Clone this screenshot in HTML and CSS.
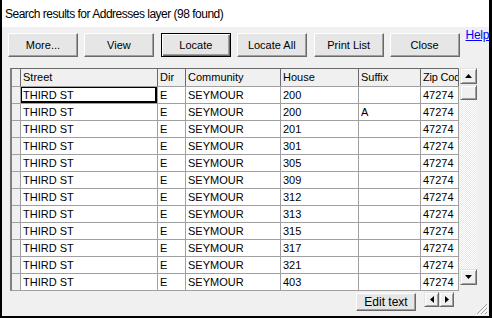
FILE: index.html
```html
<!DOCTYPE html>
<html>
<head>
<meta charset="utf-8">
<link rel="stylesheet" href="styles.css">
</head>
<body>
<div class="window">
  <div class="title">Search results for Addresses layer (98 found)</div>
  <div class="toolbar">
    <div class="btn">More...</div>
    <div class="btn">View</div>
    <div class="btn default wide1">Locate</div>
    <div class="btn">Locate All</div>
    <div class="btn wide1">Print List</div>
    <div class="btn">Close</div>
    <a class="help" href="#">Help</a>
  </div>
  <div class="gridarea">
    <div class="grid">
      <div class="hd ind"></div><div class="hd">Street</div><div class="hd">Dir</div><div class="hd">Community</div><div class="hd">House</div><div class="hd">Suffix</div><div class="hd clip">Zip Code</div>

      <div class="ind"></div><div class="c focus">THIRD ST</div><div class="c">E</div><div class="c">SEYMOUR</div><div class="c">200</div><div class="c"></div><div class="c">47274</div>
      <div class="ind"></div><div class="c">THIRD ST</div><div class="c">E</div><div class="c">SEYMOUR</div><div class="c">200</div><div class="c">A</div><div class="c">47274</div>
      <div class="ind"></div><div class="c">THIRD ST</div><div class="c">E</div><div class="c">SEYMOUR</div><div class="c">201</div><div class="c"></div><div class="c">47274</div>
      <div class="ind"></div><div class="c">THIRD ST</div><div class="c">E</div><div class="c">SEYMOUR</div><div class="c">301</div><div class="c"></div><div class="c">47274</div>
      <div class="ind"></div><div class="c">THIRD ST</div><div class="c">E</div><div class="c">SEYMOUR</div><div class="c">305</div><div class="c"></div><div class="c">47274</div>
      <div class="ind"></div><div class="c">THIRD ST</div><div class="c">E</div><div class="c">SEYMOUR</div><div class="c">309</div><div class="c"></div><div class="c">47274</div>
      <div class="ind"></div><div class="c">THIRD ST</div><div class="c">E</div><div class="c">SEYMOUR</div><div class="c">312</div><div class="c"></div><div class="c">47274</div>
      <div class="ind"></div><div class="c">THIRD ST</div><div class="c">E</div><div class="c">SEYMOUR</div><div class="c">313</div><div class="c"></div><div class="c">47274</div>
      <div class="ind"></div><div class="c">THIRD ST</div><div class="c">E</div><div class="c">SEYMOUR</div><div class="c">315</div><div class="c"></div><div class="c">47274</div>
      <div class="ind"></div><div class="c">THIRD ST</div><div class="c">E</div><div class="c">SEYMOUR</div><div class="c">317</div><div class="c"></div><div class="c">47274</div>
      <div class="ind"></div><div class="c">THIRD ST</div><div class="c">E</div><div class="c">SEYMOUR</div><div class="c">321</div><div class="c"></div><div class="c">47274</div>
      <div class="ind"></div><div class="c">THIRD ST</div><div class="c">E</div><div class="c">SEYMOUR</div><div class="c">403</div><div class="c"></div><div class="c">47274</div>
    </div>
    <div class="vscroll">
      <div class="sbtn"><svg width="7" height="4" viewBox="0 0 7 4"><path d="M3.5 0 L7 4 L0 4 Z" fill="#000"/></svg></div>
      <div class="thumb"></div>
      <div class="track"></div>
      <div class="sbtn"><svg width="7" height="4" viewBox="0 0 7 4"><path d="M0 0 L7 0 L3.5 4 Z" fill="#000"/></svg></div>
    </div>
  </div>
  <div class="bottombar">
    <div class="btn edit">Edit text</div>
    <div class="hscroll">
      <div class="hbtn"><svg width="4" height="7" viewBox="0 0 4 7"><path d="M4 0 L4 7 L0 3.5 Z" fill="#000"/></svg></div>
      <div class="hbtn"><svg width="4" height="7" viewBox="0 0 4 7"><path d="M0 0 L4 3.5 L0 7 Z" fill="#000"/></svg></div>
    </div>
  </div>
  <svg class="grip" width="12" height="12" viewBox="0 0 12 12">
    <path d="M11 1 L1 11 M11 5 L5 11 M11 9 L9 11" stroke="#a0a0a0" stroke-width="1"/>
    <path d="M12 2 L2 12 M12 6 L6 12 M12 10 L10 12" stroke="#fff" stroke-width="1"/>
  </svg>
</div>
</body>
</html>
```

FILE: styles.css
```css
html, body {
  margin: 0;
  padding: 0;
}
body {
  width: 492px;
  height: 318px;
  overflow: hidden;
  font-family: "Liberation Sans", Arial, sans-serif;
  color: #000;
}
.window {
  position: relative;
  box-sizing: border-box;
  width: 492px;
  height: 318px;
  background: #f0f0f0;
  border-left: 2px solid #000;
  border-right: 3px solid #000;
  border-bottom: 2px solid #000;
}
.title {
  height: 27px;
  background: #fff;
  font-size: 12px;
  letter-spacing: -0.5px;
  line-height: 28px;
  padding-left: 3px;
  white-space: nowrap;
}
.toolbar {
  display: flex;
  align-items: flex-start;
  padding: 6px 0 0 6px;
  gap: 6px;
  height: 24px;
}
.btn {
  box-sizing: border-box;
  width: 70px;
  height: 24px;
  background: #e6e6e6;
  border: 1px solid;
  border-color: #fff #696969 #696969 #fff;
  box-shadow: inset -1px -1px #a0a0a0;
  font-size: 11px;
  display: flex;
  align-items: center;
  justify-content: center;
  padding-bottom: 1px;
}
.btn.default {
  border-color: #000;
  box-shadow: inset 1px 1px #fff, inset -1px -1px #696969, inset -2px -2px #a0a0a0;
}
.btn.wide1 {
  margin-left: 1px;
}
.help {
  margin: -5px 0 0 0;
  font-size: 12px;
  letter-spacing: -0.3px;
  color: #0000ff;
  text-decoration: underline;
}
.gridarea {
  display: flex;
  align-items: flex-start;
  gap: 1px;
  margin: 11px 0 0 8px;
}
.grid {
  display: grid;
  grid-template-columns: 8px 136px 27px 94px 77px 61px 37px;
  grid-auto-rows: 16px;
  grid-template-rows: 17px;
  gap: 1px;
  background: #a0a0a0;
  border-top: 1px solid #696969;
  border-left: 2px solid #808080;
  border-right: 1px solid #a0a0a0;
  border-bottom: 1px solid #a0a0a0;
  font-size: 11px;
}
.grid > div {
  background: #fff;
  padding-left: 2px;
  line-height: 16px;
  white-space: nowrap;
  overflow: hidden;
}
.grid > .hd {
  background: #f0f0f0;
  line-height: 17px;
  box-shadow: 1px 0 0 #696969;
}
.grid > .ind {
  background: #f0f0f0;
  padding-left: 0;
}
.grid > .clip {
  text-overflow: clip;
  letter-spacing: -0.2px;
}
.grid > .focus {
  box-shadow: inset 1px 1px #000, inset -2px -2px #000;
}
.vscroll {
  width: 17px;
  height: 217px;
  display: flex;
  flex-direction: column;
}
.sbtn {
  box-sizing: border-box;
  height: 16px;
  background: #f0f0f0;
  border: 1px solid;
  border-color: #e3e3e3 #696969 #696969 #e3e3e3;
  box-shadow: inset 1px 1px #fff, inset -1px -1px #a0a0a0;
  display: flex;
  align-items: center;
  justify-content: center;
}
.thumb {
  box-sizing: border-box;
  height: 15px;
  margin-top: 1px;
  background: #f0f0f0;
  border: 1px solid;
  border-color: #e3e3e3 #696969 #696969 #e3e3e3;
  box-shadow: inset 1px 1px #fff, inset -1px -1px #a0a0a0;
}
.track {
  flex: 1;
  background-color: #fff;
  background-image: repeating-conic-gradient(#e8e8e8 0 25%, #fff 0 50%);
  background-size: 2px 2px;
}
.bottombar {
  display: flex;
  justify-content: flex-end;
  align-items: flex-start;
  gap: 8px;
  padding-right: 35px;
}
.btn.edit {
  width: 60px;
  height: 18px;
  margin-top: 2px;
  font-size: 12px;
}
.hscroll {
  display: flex;
  margin-top: 1px;
}
.hbtn {
  box-sizing: border-box;
  width: 15px;
  height: 15px;
  background: #f0f0f0;
  border: 1px solid;
  border-color: #e3e3e3 #696969 #696969 #e3e3e3;
  box-shadow: inset 1px 1px #fff, inset -1px -1px #a0a0a0;
  display: flex;
  align-items: center;
  justify-content: center;
}
.grip {
  position: absolute;
  right: 1px;
  bottom: 1px;
}
```
